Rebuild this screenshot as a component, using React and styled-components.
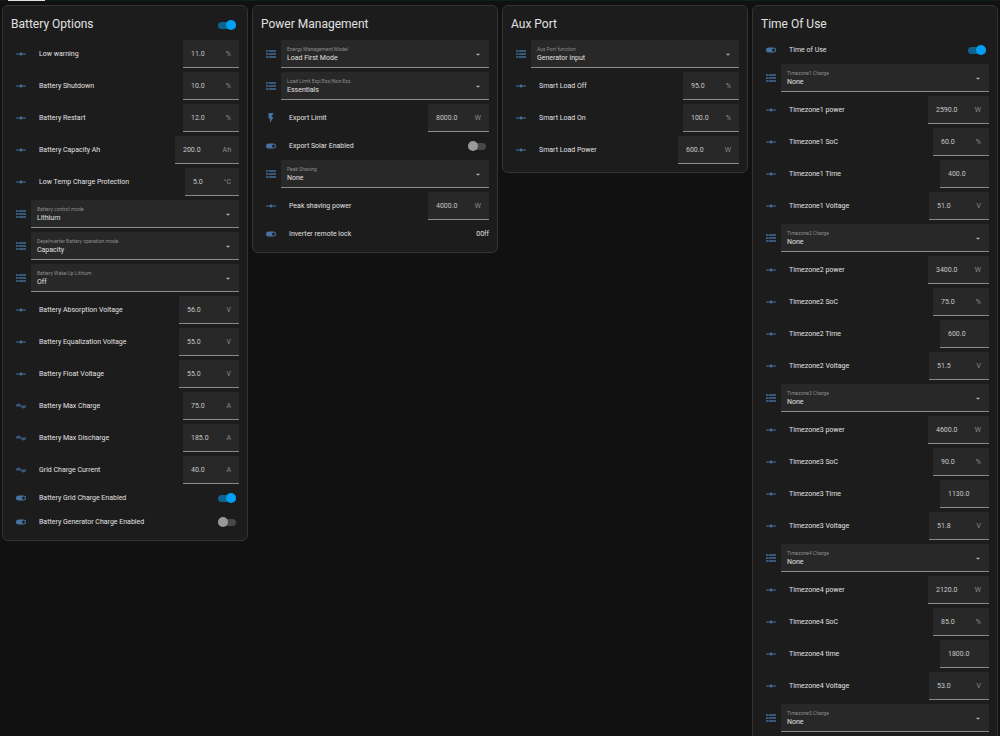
import React, { useState } from "react";
import styled, { createGlobalStyle } from "styled-components";

const GlobalStyle = createGlobalStyle`
  * {
    box-sizing: border-box;
  }
  html {
    scrollbar-width: none;
  }
  body {
    margin: 0;
    background-color: #111111;
    color: #e1e1e1;
    font-family: Roboto, "Noto Sans", sans-serif;
    font-size: 7px;
  }
`;

const TopBar = styled.div`
  height: 1px;
  padding-left: 8px;
  background-color: #101e24;
`;

const ActiveTab = styled.div`
  width: 37px;
  height: 1px;
  background-color: #e1e1e1;
`;

const Board = styled.main`
  display: grid;
  grid-template-columns: repeat(4, 1fr);
  align-items: start;
  gap: 4px;
  padding: 4px 2px;
`;

const Card = styled.section`
  padding: 0 8px 8px;
  border: 1px solid #333333;
  border-radius: 6px;
  background-color: #1c1c1c;
`;

const CardHeader = styled.header`
  display: flex;
  justify-content: space-between;
  align-items: flex-end;
  height: 34px;
  padding-bottom: 10px;
`;

const Title = styled.h2`
  margin: 0;
  font-size: 12px;
  font-weight: 400;
  line-height: 12px;
`;

const Rows = styled.div`
  display: flex;
  flex-direction: column;
  gap: 4px;
`;

const Row = styled.div`
  display: flex;
  align-items: center;
  height: ${(props) => (props.$short ? "20px" : "28px")};
`;

const IconBox = styled.span`
  display: flex;
  justify-content: center;
  flex: 0 0 20px;
  color: ${(props) => (props.$dim ? "#36587a" : "#44739e")};
`;

const Name = styled.label`
  flex: 1;
  padding-left: 8px;
  line-height: 10px;
`;

const NumberField = styled.span`
  display: flex;
  align-items: center;
  width: ${(props) => props.$width}px;
  height: 28px;
  padding: 0 8px;
  border-bottom: 1px solid #8c8c8c;
  border-radius: 2px 2px 0 0;
  background-color: #282828;
`;

const NumberInput = styled.input`
  flex: 1;
  min-width: 0;
  padding: 0;
  border: none;
  outline: none;
  background: none;
  color: #c8c8c8;
  font: inherit;
`;

const Unit = styled.span`
  color: #8c8c8c;
`;

const SelectField = styled.div`
  flex: 1;
  display: grid;
  grid-template-columns: 1fr 10px;
  grid-template-rows: 7px 10px;
  align-content: end;
  align-items: center;
  height: 28px;
  padding: 0 6px 4px;
  border-bottom: 1px solid #8c8c8c;
  border-radius: 2px 2px 0 0;
  background-color: #282828;
`;

const SelectLabel = styled.label`
  grid-column: 1;
  grid-row: 1;
  color: #8c8c8c;
  font-size: 5px;
  line-height: 7px;
`;

const Select = styled.select`
  grid-column: 1;
  grid-row: 2;
  height: 10px;
  padding: 0;
  border: none;
  outline: none;
  appearance: none;
  background: none;
  color: #e1e1e1;
  font: inherit;
  line-height: 10px;
`;

const Arrow = styled.svg`
  grid-column: 2;
  grid-row: 1 / 3;
  color: #b4b4b4;
`;

const Switch = styled.input`
  position: relative;
  width: 18px;
  height: 10px;
  margin: 0 3px 0 0;
  appearance: none;
  cursor: pointer;

  &::before {
    content: "";
    position: absolute;
    top: 2px;
    left: 0;
    width: 18px;
    height: 7px;
    border-radius: 4px;
    background-color: ${(props) => (props.checked ? "#0e6491" : "#484848")};
  }

  &::after {
    content: "";
    position: absolute;
    top: 0;
    left: ${(props) => (props.checked ? "8px" : "0")};
    width: 10px;
    height: 10px;
    border-radius: 50%;
    background-color: ${(props) => (props.checked ? "#039ff4" : "#999999")};
  }
`;

const icons = {
  vertex:
    "M2,11H9.17C9.58,9.83 10.69,9 12,9C13.31,9 14.42,9.83 14.83,11H22V13H14.83C14.42,14.17 13.31,15 12,15C10.69,15 9.58,14.17 9.17,13H2V11Z",
  list: "M2,4H7V8H2ZM8,4H22V8H8ZM2,10H7V14H2ZM8,10H22V14H8ZM2,16H7V20H2ZM8,16H22V20H8Z",
  flash: "M7,2V13H10V22L17,10H13L17,2H7Z",
  current:
    "M12.43,11C12.28,10.84 10,7 7,7S2.32,10.18 2,11V13H11.57C11.72,13.16 14,17 17,17S21.68,13.82 22,13V11H12.43Z",
  toggle:
    "M17,7H7A5,5 0 0,0 2,12A5,5 0 0,0 7,17H17A5,5 0 0,0 22,12A5,5 0 0,0 17,7M17,15A3,3 0 0,1 14,12A3,3 0 0,1 17,9A3,3 0 0,1 20,12A3,3 0 0,1 17,15Z",
};

const dimIcons = ["list", "current"];

const fieldWidths = { "%": 56, Ah: 64, "°C": 54, V: 60, A: 56, W: 61, "": 49 };

const toId = (text) => text.toLowerCase().replace(/[^a-z0-9]+/g, "-");

const number = (name, value, unit = "", icon = "vertex") => ({ type: "number", name, value, unit, icon });
const select = (name, value) => ({ type: "select", name, value, icon: "list" });
const toggle = (name, value) => ({ type: "toggle", name, value, icon: "toggle" });
const text = (name, value) => ({ type: "text", name, value, icon: "toggle" });

const timezone = (n, power, soc, time, voltage, timeWord = "Time") => [
  select(`Timezone${n} Charge`, "None"),
  number(`Timezone${n} power`, power, "W"),
  number(`Timezone${n} SoC`, soc, "%"),
  number(`Timezone${n} ${timeWord}`, time),
  number(`Timezone${n} Voltage`, voltage, "V"),
];

const cards = [
  {
    title: "Battery Options",
    master: true,
    rows: [
      number("Low warning", "11.0", "%"),
      number("Battery Shutdown", "10.0", "%"),
      number("Battery Restart", "12.0", "%"),
      number("Battery Capacity Ah", "200.0", "Ah"),
      number("Low Temp Charge Protection", "5.0", "°C"),
      select("Battery control mode", "Lithium"),
      select("DeyeInverter Battery operation mode", "Capacity"),
      select("Battery Wake Up Lithium", "Off"),
      number("Battery Absorption Voltage", "56.0", "V"),
      number("Battery Equalization Voltage", "55.0", "V"),
      number("Battery Float Voltage", "55.0", "V"),
      number("Battery Max Charge", "75.0", "A", "current"),
      number("Battery Max Discharge", "185.0", "A", "current"),
      number("Grid Charge Current", "40.0", "A", "current"),
      toggle("Battery Grid Charge Enabled", true),
      toggle("Battery Generator Charge Enabled", false),
    ],
  },
  {
    title: "Power Management",
    rows: [
      select("Energy Management Model", "Load First Mode"),
      select("Load Limit Exp/Ess/Non-Ess", "Essentials"),
      number("Export Limit", "8000.0", "W", "flash"),
      toggle("Export Solar Enabled", false),
      select("Peak Shaving", "None"),
      number("Peak shaving power", "4000.0", "W"),
      text("Inverter remote lock", "00ff"),
    ],
  },
  {
    title: "Aux Port",
    rows: [
      select("Aux Port function", "Generator input"),
      number("Smart Load Off", "95.0", "%"),
      number("Smart Load On", "100.0", "%"),
      number("Smart Load Power", "600.0", "W"),
    ],
  },
  {
    title: "Time Of Use",
    rows: [
      toggle("Time of Use", true),
      ...timezone(1, "2590.0", "60.0", "400.0", "51.0"),
      ...timezone(2, "3400.0", "75.0", "600.0", "51.5"),
      ...timezone(3, "4600.0", "90.0", "1130.0", "51.8"),
      ...timezone(4, "2120.0", "85.0", "1800.0", "53.0", "time"),
      select("Timezone5 Charge", "None"),
    ],
  },
];

const Icon = ({ name }) => (
  <IconBox $dim={dimIcons.includes(name)}>
    <svg width="12" height="12" viewBox="0 0 24 24" fill="currentColor" aria-hidden="true">
      <path d={icons[name]} />
    </svg>
  </IconBox>
);

const Toggle = ({ initial, ...rest }) => {
  const [on, setOn] = useState(initial);
  return <Switch type="checkbox" checked={on} onChange={(e) => setOn(e.target.checked)} {...rest} />;
};

const EntityRow = ({ type, name, value, unit, icon }) => {
  const id = toId(name);

  if (type === "select") {
    return (
      <Row>
        <Icon name={icon} />
        <SelectField>
          <SelectLabel htmlFor={id}>{name}</SelectLabel>
          <Select id={id} defaultValue={value}>
            <option value={value}>{value}</option>
          </Select>
          <Arrow width="10" height="10" viewBox="0 0 24 24" fill="currentColor" aria-hidden="true">
            <path d="M7,9L12,14L17,9H7Z" />
          </Arrow>
        </SelectField>
      </Row>
    );
  }

  return (
    <Row $short={type !== "number"}>
      <Icon name={icon} />
      <Name as={type === "text" ? "span" : "label"} htmlFor={type === "text" ? undefined : id}>
        {name}
      </Name>
      {type === "number" && (
        <NumberField $width={fieldWidths[unit]}>
          <NumberInput id={id} inputMode="decimal" defaultValue={value} />
          {unit && <Unit>{unit}</Unit>}
        </NumberField>
      )}
      {type === "toggle" && <Toggle id={id} initial={value} />}
      {type === "text" && <span>{value}</span>}
    </Row>
  );
};

const App = () => (
  <>
    <GlobalStyle />
    <TopBar>
      <ActiveTab />
    </TopBar>
    <Board>
      {cards.map((card) => (
        <Card key={card.title}>
          <CardHeader>
            <Title>{card.title}</Title>
            {card.master && <Toggle initial={true} aria-label={card.title} />}
          </CardHeader>
          <Rows>
            {card.rows.map((row) => (
              <EntityRow key={row.name} {...row} />
            ))}
          </Rows>
        </Card>
      ))}
    </Board>
  </>
);

export default App;
